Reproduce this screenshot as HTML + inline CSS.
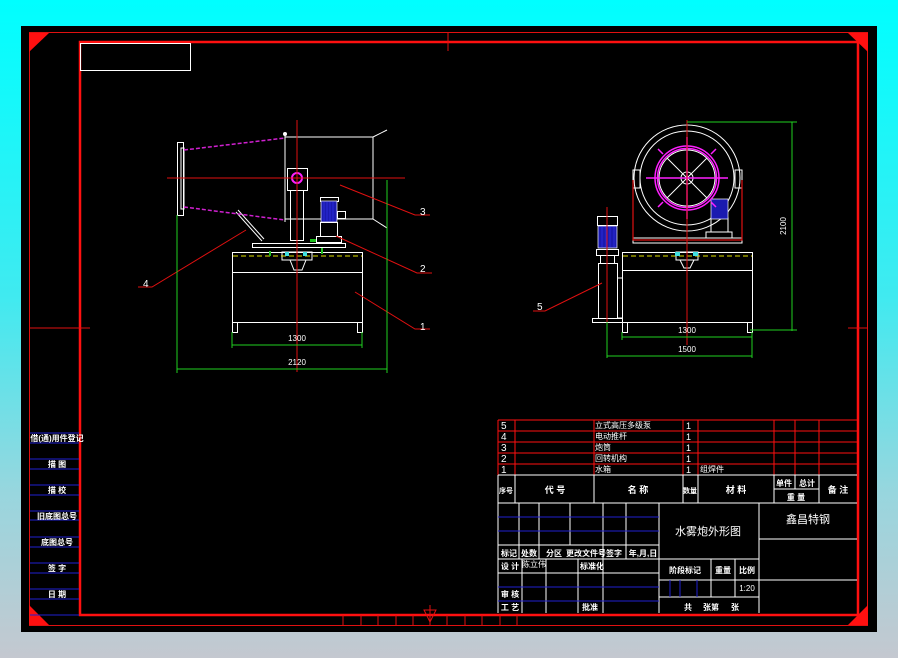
<!DOCTYPE html>
<html><head><meta charset="utf-8"><style>
html,body{margin:0;padding:0;width:898px;height:658px;overflow:hidden;background:#00ffff;}
svg{position:absolute;left:0;top:0;}
text{font-family:"Liberation Sans","Noto Sans CJK SC",sans-serif;fill:#fff;}
</style></head><body>
<svg width="898" height="658" viewBox="0 0 898 658" xmlns="http://www.w3.org/2000/svg">
<defs><linearGradient id="bg" x1="0" y1="0" x2="0" y2="1">
<stop offset="0" stop-color="#00ffff"/><stop offset="0.45" stop-color="#40eaf0"/><stop offset="0.75" stop-color="#98d6de"/><stop offset="1" stop-color="#c4c8d0"/>
</linearGradient></defs>
<rect x="0" y="0" width="898" height="658" fill="url(#bg)"/>
<rect x="21" y="26" width="856" height="606" fill="#000"/>
<!-- frames -->
<rect x="29.5" y="32.5" width="838" height="593" fill="none" stroke="#e01010" stroke-width="1"/>
<rect x="80" y="42" width="778" height="573" fill="none" stroke="#ff1010" stroke-width="2.5"/>
<polygon points="29,33 49,33 29,52" fill="#ff1010"/>
<polygon points="868,33 848,33 868,52" fill="#ff1010"/>
<polygon points="29,625 29,605 49,625" fill="#ff1010"/>
<polygon points="868,625 868,605 848,625" fill="#ff1010"/>
<g stroke="#e01010" stroke-width="1">
<line x1="448" y1="32" x2="448" y2="51"/>
<line x1="30" y1="328" x2="90" y2="328"/>
<line x1="848" y1="328" x2="868" y2="328"/>
<line x1="343" y1="615" x2="343" y2="625"/><line x1="361" y1="615" x2="361" y2="625"/><line x1="378" y1="615" x2="378" y2="625"/><line x1="396" y1="615" x2="396" y2="625"/><line x1="413" y1="615" x2="413" y2="625"/><line x1="447" y1="615" x2="447" y2="625"/><line x1="465" y1="615" x2="465" y2="625"/><line x1="482" y1="615" x2="482" y2="625"/><line x1="500" y1="615" x2="500" y2="625"/><line x1="517" y1="615" x2="517" y2="625"/>
<path d="M430,605 V626 M424,610 H436 L430,622 Z" fill="none"/>
</g>
<rect x="80.5" y="43.5" width="110" height="27" fill="none" stroke="#fff"/>

<!-- left column table -->
<g stroke="#2020d0" stroke-width="1">
<line x1="30" y1="433" x2="79" y2="433"/><line x1="30" y1="443" x2="79" y2="443"/>
<line x1="30" y1="459" x2="79" y2="459"/><line x1="30" y1="469" x2="79" y2="469"/>
<line x1="30" y1="485" x2="79" y2="485"/><line x1="30" y1="495" x2="79" y2="495"/>
<line x1="30" y1="511" x2="79" y2="511"/><line x1="30" y1="520" x2="79" y2="520"/>
<line x1="30" y1="537" x2="79" y2="537"/><line x1="30" y1="547" x2="79" y2="547"/>
<line x1="30" y1="563" x2="79" y2="563"/><line x1="30" y1="573" x2="79" y2="573"/>
<line x1="30" y1="589" x2="79" y2="589"/><line x1="30" y1="599" x2="79" y2="599"/>
<line x1="30" y1="615" x2="79" y2="615"/>
</g>
<g font-size="8" text-anchor="middle" font-weight="bold">
<text x="57" y="441">借(通)用件登记</text>
<text x="57" y="467">描 图</text>
<text x="57" y="493">描 校</text>
<text x="57" y="519">旧底图总号</text>
<text x="57" y="545">底图总号</text>
<text x="57" y="571">签 字</text>
<text x="57" y="597">日 期</text>
</g>

<!-- LEFT VIEW -->
<g fill="none" stroke="#fff" stroke-width="1">
<rect x="177.5" y="142.5" width="6" height="73"/>
<rect x="181" y="148" width="3" height="61"/>
<line x1="285" y1="137" x2="373" y2="137"/>
<line x1="285" y1="219" x2="373" y2="219"/>
<line x1="373" y1="137" x2="373" y2="219"/>
<line x1="373" y1="137" x2="387" y2="130"/>
<line x1="373" y1="219" x2="387" y2="228"/>
<line x1="285" y1="134" x2="285" y2="222"/>
<rect x="287.5" y="168.5" width="20" height="22"/>
<rect x="290.5" y="190.5" width="13" height="50"/>
<line x1="236" y1="212" x2="262" y2="241"/><line x1="238" y1="210" x2="264" y2="239"/>
<rect x="252.5" y="243.5" width="93" height="4"/>
<rect x="282" y="252" width="30" height="8"/>
<path d="M290,260 L294,270 H302 L306,260"/>
<rect x="232.5" y="252.5" width="130" height="20"/>
<rect x="232.5" y="272.5" width="130" height="50"/>
<rect x="232.5" y="322.5" width="5" height="10"/><rect x="357.5" y="322.5" width="5" height="10"/>
<rect x="320.5" y="197.5" width="18" height="4"/>
<rect x="337.5" y="211.5" width="8" height="7"/>
<rect x="320.5" y="222.5" width="17" height="14"/>
<rect x="316.5" y="236.5" width="25" height="6"/>
</g>
<circle cx="285" cy="134" r="2" fill="#fff"/>
<rect x="321" y="201" width="16" height="21" fill="#1a1ab0" stroke="#fff" stroke-width="0.7"/>
<g stroke="#3a3aff" stroke-width="0.5"><line x1="324" y1="202" x2="324" y2="221"/><line x1="327" y1="202" x2="327" y2="221"/><line x1="330" y1="202" x2="330" y2="221"/><line x1="333" y1="202" x2="333" y2="221"/></g>
<line x1="233" y1="256" x2="362" y2="256" stroke="#e0e000" stroke-dasharray="5,3"/>
<rect x="285" y="252" width="4" height="4" fill="#40e0e0"/><rect x="303" y="252" width="4" height="4" fill="#40e0e0"/>
<rect x="310" y="239" width="6" height="3" fill="#20c020"/>
<line x1="270" y1="251" x2="270" y2="256" stroke="#20c020" stroke-width="2"/>
<line x1="322" y1="248" x2="322" y2="254" stroke="#20c020" stroke-width="2"/>
<g stroke="#d020d0" stroke-width="1.5" stroke-dasharray="4,2">
<line x1="184" y1="150" x2="285" y2="138"/>
<line x1="184" y1="207" x2="285" y2="220"/>
</g>
<circle cx="297" cy="178" r="5" fill="none" stroke="#ff20ff" stroke-width="2"/>
<g stroke="#e01010" stroke-width="1" fill="none">
<line x1="297" y1="120" x2="297" y2="372"/>
<line x1="167" y1="178" x2="405" y2="178"/>
<path d="M138,287 H152 L246,230"/>
<path d="M340,185 L415,215 H430"/>
<path d="M336,236 L417,273 H432"/>
<path d="M355,292 L415,329 H430"/>
</g>
<g stroke="#20d020" stroke-width="1" fill="none">
<line x1="177" y1="215" x2="177" y2="373"/>
<line x1="387" y1="180" x2="387" y2="373"/>
<line x1="232" y1="332" x2="232" y2="348"/><line x1="362" y1="332" x2="362" y2="348"/>
<line x1="232" y1="345" x2="362" y2="345"/>
<line x1="177" y1="369" x2="387" y2="369"/>
</g>
<g font-size="8" text-anchor="middle" style="fill:#20e020">
<text x="297" y="341">1300</text><text x="297" y="365">2120</text>
</g>
<g font-size="10" style="fill:#fff">
<text x="143" y="287">4</text><text x="420" y="215">3</text><text x="420" y="272">2</text><text x="420" y="330">1</text>
</g>

<!-- RIGHT VIEW -->
<g fill="none" stroke="#fff" stroke-width="1">
<circle cx="687" cy="178" r="53"/>
<circle cx="687" cy="178" r="47"/>
<circle cx="687" cy="178" r="28"/>
<circle cx="687" cy="178" r="6"/>
<line x1="687" y1="150" x2="687" y2="206"/><line x1="659" y1="178" x2="715" y2="178"/>
<line x1="667" y1="158" x2="707" y2="198"/><line x1="707" y1="158" x2="667" y2="198"/>
<path d="M633,178 V243 H742 V178"/>
<line x1="633" y1="238" x2="742" y2="238"/>
<rect x="633" y="170" width="7" height="18"/><rect x="735" y="170" width="7" height="18"/>
<rect x="711" y="218" width="17" height="14"/><rect x="706" y="232" width="26" height="6"/>
<rect x="622.5" y="252.5" width="130" height="18"/>
<rect x="622.5" y="270.5" width="130" height="52"/>
<rect x="622.5" y="322.5" width="5" height="10"/><rect x="747.5" y="322.5" width="5" height="10"/>
<rect x="597.5" y="216.5" width="20" height="9"/>
<rect x="596.5" y="249.5" width="22" height="6"/><rect x="600.5" y="255.5" width="14" height="8"/>
<rect x="598.5" y="263.5" width="19" height="55"/>
<rect x="592.5" y="318.5" width="30" height="4"/>
<rect x="617.5" y="278" width="5" height="40"/>
<rect x="676" y="252" width="22" height="8"/>
<path d="M680,260 L684,268 H690 L694,260"/>
</g>
<rect x="598" y="226" width="19" height="22" fill="#1a1ab0" stroke="#fff" stroke-width="0.7"/>
<rect x="711" y="199" width="17" height="20" fill="#1a1ab0" stroke="#fff" stroke-width="0.7"/>
<g stroke="#3a3aff" stroke-width="0.5"><line x1="602" y1="227" x2="602" y2="247"/><line x1="606" y1="227" x2="606" y2="247"/><line x1="610" y1="227" x2="610" y2="247"/><line x1="614" y1="227" x2="614" y2="247"/></g>
<line x1="623" y1="256" x2="752" y2="256" stroke="#e0e000" stroke-dasharray="5,3"/>
<rect x="675" y="252" width="5" height="4" fill="#40e0e0"/><rect x="693" y="252" width="5" height="4" fill="#40e0e0"/>
<g stroke="#e01010" stroke-width="1.2" fill="none">
<path d="M633,180 V240 H742 V180"/>
</g>
<g stroke="#ff20ff" stroke-width="1.5" fill="none">
<circle cx="687" cy="178" r="32"/>
<circle cx="687" cy="178" r="29.5"/>
<line x1="687" y1="137" x2="687" y2="219"/><line x1="646" y1="178" x2="728" y2="178"/>
<line x1="658" y1="149" x2="663" y2="154"/><line x1="716" y1="149" x2="711" y2="154"/>
<line x1="658" y1="207" x2="663" y2="202"/><line x1="716" y1="207" x2="711" y2="202"/>
</g>
<g stroke="#e01010" stroke-width="1" fill="none">
<line x1="687" y1="120" x2="687" y2="345"/>
<line x1="607" y1="207" x2="607" y2="325"/>
<path d="M533,311 H545 L602,283"/>
</g>
<g stroke="#20d020" stroke-width="1" fill="none">
<line x1="687" y1="122" x2="797" y2="122"/>
<line x1="792" y1="122" x2="792" y2="331"/>
<line x1="750" y1="330" x2="797" y2="330"/>
<line x1="622" y1="332" x2="622" y2="340"/><line x1="752" y1="332" x2="752" y2="358"/>
<line x1="607" y1="322" x2="607" y2="358"/>
<line x1="622" y1="337" x2="752" y2="337"/>
<line x1="607" y1="356" x2="752" y2="356"/>
</g>
<g font-size="8" text-anchor="middle" style="fill:#20e020">
<text x="687" y="333">1300</text><text x="687" y="352">1500</text>
<text x="786" y="226" transform="rotate(-90 786 226)">2100</text>
</g>
<text x="537" y="310" font-size="10" style="fill:#fff">5</text>

<!-- PARTS LIST -->
<g stroke="#ff1010" stroke-width="1" fill="none">
<line x1="498" y1="420" x2="857" y2="420"/>
<line x1="498" y1="431" x2="857" y2="431"/>
<line x1="498" y1="442" x2="857" y2="442"/>
<line x1="498" y1="453" x2="857" y2="453"/>
<line x1="498" y1="464" x2="857" y2="464"/>
<line x1="498" y1="420" x2="498" y2="475"/><line x1="515" y1="420" x2="515" y2="475"/><line x1="594" y1="420" x2="594" y2="475"/><line x1="683" y1="420" x2="683" y2="475"/><line x1="698" y1="420" x2="698" y2="475"/><line x1="774" y1="420" x2="774" y2="475"/><line x1="795" y1="420" x2="795" y2="475"/><line x1="819" y1="420" x2="819" y2="475"/>
</g>
<g stroke="#fff" stroke-width="1" fill="none">
<line x1="498" y1="475" x2="857" y2="475"/>
<line x1="498" y1="503" x2="857" y2="503"/>
<line x1="498" y1="475" x2="498" y2="613"/><line x1="515" y1="475" x2="515" y2="503"/><line x1="594" y1="475" x2="594" y2="503"/><line x1="683" y1="475" x2="683" y2="503"/><line x1="698" y1="475" x2="698" y2="503"/><line x1="774" y1="475" x2="774" y2="503"/><line x1="795" y1="475" x2="795" y2="489"/><line x1="819" y1="475" x2="819" y2="503"/>
<line x1="774" y1="489" x2="819" y2="489"/>
<line x1="659" y1="503" x2="659" y2="613"/>
<line x1="759" y1="503" x2="759" y2="613"/>
<line x1="519" y1="503" x2="519" y2="559"/><line x1="539" y1="503" x2="539" y2="559"/><line x1="570" y1="503" x2="570" y2="545"/><line x1="603" y1="503" x2="603" y2="559"/><line x1="626" y1="503" x2="626" y2="559"/>
<line x1="498" y1="545" x2="659" y2="545"/>
<line x1="498" y1="559" x2="759" y2="559"/>
<line x1="498" y1="573" x2="659" y2="573"/>
<line x1="522" y1="559" x2="522" y2="613"/><line x1="546" y1="559" x2="546" y2="613"/><line x1="578" y1="559" x2="578" y2="613"/><line x1="603" y1="559" x2="603" y2="613"/>
<line x1="711" y1="559" x2="711" y2="597"/><line x1="735" y1="559" x2="735" y2="597"/>
<line x1="659" y1="580" x2="759" y2="580"/>
<line x1="659" y1="597" x2="759" y2="597"/>
<line x1="759" y1="539" x2="857" y2="539"/>
<line x1="759" y1="580" x2="857" y2="580"/>
</g>
<g stroke="#2020d0" stroke-width="1">
<line x1="498" y1="517" x2="659" y2="517"/><line x1="498" y1="531" x2="659" y2="531"/>
<line x1="498" y1="587" x2="659" y2="587"/><line x1="498" y1="601" x2="659" y2="601"/>
<line x1="670" y1="580" x2="670" y2="597"/><line x1="680" y1="580" x2="680" y2="597"/><line x1="697" y1="580" x2="697" y2="597"/>
</g>
<g font-size="9" style="fill:#fff">
<text x="501" y="429" font-size="10">5</text><text x="501" y="440" font-size="10">4</text><text x="501" y="451" font-size="10">3</text><text x="501" y="462" font-size="10">2</text><text x="501" y="473" font-size="10">1</text>
<text x="595" y="428" font-size="8">立式高压多级泵</text>
<text x="595" y="439" font-size="8">电动推杆</text>
<text x="595" y="450" font-size="8">炮筒</text>
<text x="595" y="461" font-size="8">回转机构</text>
<text x="595" y="472" font-size="8">水箱</text>
<text x="686" y="429">1</text><text x="686" y="440">1</text><text x="686" y="451">1</text><text x="686" y="462">1</text><text x="686" y="473">1</text>
<text x="700" y="472" font-size="8">组焊件</text>
</g>
<g font-size="9" font-weight="bold" text-anchor="middle">
<text x="506" y="493" font-size="7">序号</text>
<text x="555" y="493">代 号</text>
<text x="638" y="493">名 称</text>
<text x="690" y="493" font-size="7">数量</text>
<text x="736" y="493">材 料</text>
<text x="784" y="486" font-size="8">单件</text><text x="807" y="486" font-size="8">总计</text>
<text x="796" y="500" font-size="8">重 量</text>
<text x="838" y="493">备 注</text>
<text x="708" y="535" font-size="11" font-weight="normal">水雾炮外形图</text>
<text x="808" y="523" font-size="11" font-weight="normal">鑫昌特钢</text>
<g font-size="8">
<text x="509" y="556">标记</text><text x="529" y="556">处数</text><text x="554" y="556">分区</text><text x="586" y="556">更改文件号</text><text x="614" y="556">签字</text><text x="643" y="556">年,月,日</text>
<text x="510" y="569">设 计</text><text x="534" y="567" font-weight="normal">陈立伟</text><text x="592" y="569">标准化</text>
<text x="685" y="573">阶段标记</text><text x="723" y="573">重量</text><text x="747" y="573">比例</text>
<text x="747" y="591" font-weight="normal">1:20</text>
<text x="510" y="597">审 核</text><text x="510" y="610">工 艺</text><text x="590" y="610">批准</text>
<text x="688" y="610">共</text><text x="711" y="610">张第</text><text x="735" y="610">张</text>
</g>
</g>
</svg>
</body></html>
